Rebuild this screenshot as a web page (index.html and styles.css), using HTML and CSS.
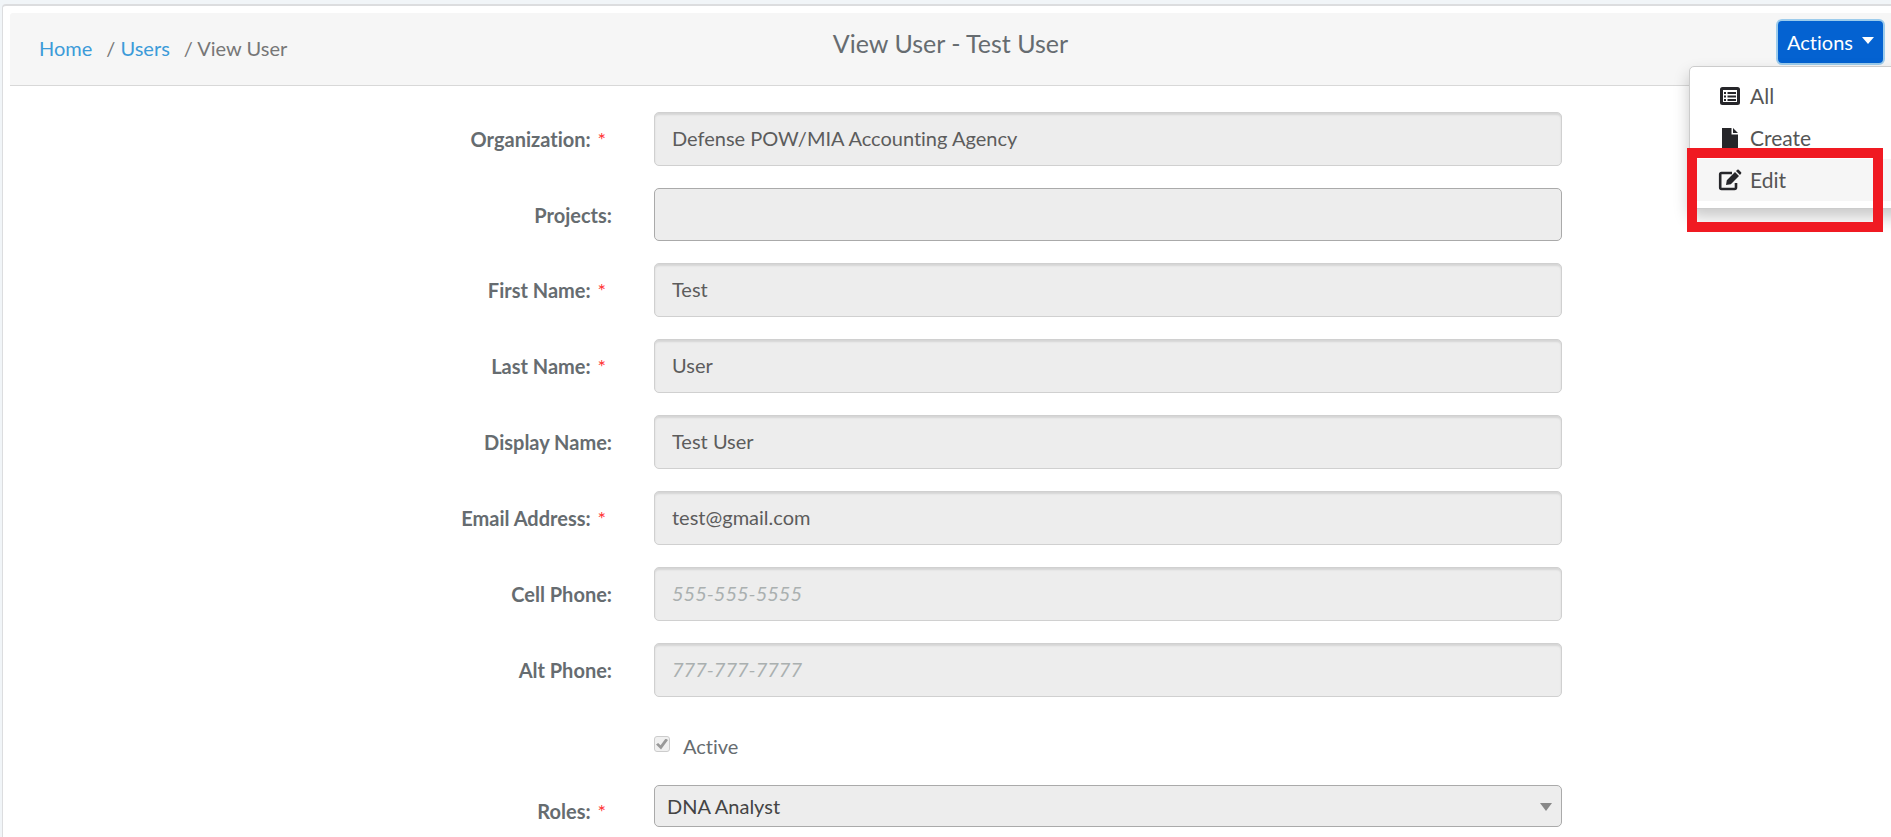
FILE: index.html
```html
<!DOCTYPE html>
<html lang="en">
<head>
<meta charset="utf-8">
<title>View User - Test User</title>
<link rel="stylesheet" href="styles.css">
</head>
<body>
<main class="panel">
  <header class="panel-header">
    <nav class="breadcrumb" aria-label="Breadcrumb">
      <a href="#">Home</a>
      <span class="crumb">/ <a href="#">Users</a></span>
      <span class="crumb">/ View User</span>
    </nav>
    <h1 class="title">View User - Test User</h1>
    <div class="actions">
      <button class="actions-button" type="button" aria-haspopup="true" aria-expanded="true">Actions <span class="caret"></span></button>
      <ul class="menu">
        <li><a class="menu-item" href="#">
          <svg class="icon" viewBox="0 0 24 24"><rect x="3.500" y="4.500" width="17" height="15" rx="1" fill="none" stroke="currentColor" stroke-width="3"/><path d="M6 8h2v2H6zM6 11.500h2v2H6zM6 15h2v2H6zM9.500 8H18v2H9.500zM9.500 11.500H18v2H9.500zM9.500 15H18v2H9.500z" fill="currentColor"/></svg>
          All</a></li>
        <li><a class="menu-item" href="#">
          <svg class="icon" viewBox="0 0 24 24"><path d="M4 2h9.500v6.500H20V22H4zM15 2l5 5h-5z" fill="currentColor"/></svg>
          Create</a></li>
        <li><a class="menu-item is-active" href="#">
          <svg class="icon" viewBox="0 0 24 24"><path d="M14 5H3.500Q2.200 5 2.200 6.300V19.500Q2.200 21 3.500 21H16.500Q18 21 18 19.500V15" fill="none" stroke="currentColor" stroke-width="2.600"/><path d="M8 17l.8-4.800L17 4l4 4-8.200 8.200zM18 3l1.300-1.200q.7-.6 1.400 0l2.400 2.400q.7.700 0 1.400L22 7z" fill="currentColor"/></svg>
          Edit</a></li>
      </ul>
      <div class="highlight"></div>
    </div>
  </header>

  <form class="form">
    <div class="row">
      <label class="label" for="org">Organization: <span class="required">*</span></label>
      <input class="field" id="org" type="text" value="Defense POW/MIA Accounting Agency" disabled>
    </div>
    <div class="row">
      <label class="label" for="projects">Projects:</label>
      <input class="field field-picker" id="projects" type="text" disabled>
    </div>
    <div class="row">
      <label class="label" for="first">First Name: <span class="required">*</span></label>
      <input class="field" id="first" type="text" value="Test" disabled>
    </div>
    <div class="row">
      <label class="label" for="last">Last Name: <span class="required">*</span></label>
      <input class="field" id="last" type="text" value="User" disabled>
    </div>
    <div class="row">
      <label class="label" for="display">Display Name:</label>
      <input class="field" id="display" type="text" value="Test User" disabled>
    </div>
    <div class="row">
      <label class="label" for="email">Email Address: <span class="required">*</span></label>
      <input class="field" id="email" type="email" value="test@gmail.com" disabled>
    </div>
    <div class="row">
      <label class="label" for="cell">Cell Phone:</label>
      <input class="field" id="cell" type="tel" placeholder="555-555-5555" disabled>
    </div>
    <div class="row">
      <label class="label" for="alt">Alt Phone:</label>
      <input class="field" id="alt" type="tel" placeholder="777-777-7777" disabled>
    </div>
    <div class="row row-check">
      <div class="check">
        <input class="checkbox" id="active" type="checkbox" checked disabled>
        <label for="active">Active</label>
      </div>
    </div>
    <div class="row row-roles">
      <label class="label" for="roles">Roles: <span class="required">*</span></label>
      <div class="select-wrap">
        <select class="select" id="roles" disabled><option>DNA Analyst</option></select>
      </div>
    </div>
  </form>
</main>
</body>
</html>
```
FILE: styles.css
```css
* { box-sizing: border-box; }

body {
  margin: 0;
  padding: 4px 0 0 2px;
  background: #f1f5f8;
  color: #666c70;
  font-family: Lato, "Liberation Sans", sans-serif;
  font-size: 20px;
  font-variant-ligatures: none;
  line-height: 30px;
  overflow: hidden;
}

a { color: #3c9bd9; text-decoration: none; }

.panel {
  min-height: 100vh;
  padding: 7px 0 0 7px;
  border: solid #dcdddf;
  border-width: 2px 0 0 1px;
  border-radius: 4px 0 0 0;
  background: #fff;
}

.panel-header {
  display: grid;
  grid-template-columns: 1fr auto 1fr;
  align-items: start;
  height: 73px;
  border-bottom: 1px solid #d8d8d8;
  border-radius: 3px 0 0 0;
  background: #f6f6f6;
}

.breadcrumb {
  display: flex;
  gap: 14px;
  padding: 20px 0 0 29px;
  color: #777;
}

.title {
  margin: 0;
  padding-top: 15px;
  font-size: 25px;
  font-weight: 400;
  line-height: 30px;
}

.actions {
  position: relative;
  justify-self: end;
  padding: 6px 6px 0;
}

.actions-button {
  display: flex;
  align-items: center;
  gap: 9px;
  height: 46px;
  padding: 0 9px;
  border: 2px solid #9dccec;
  border-radius: 6px;
  background: #0462d1;
  color: #fff;
  font: inherit;
  font-variant-ligatures: none;
}

.caret {
  margin-top: -4px;
  border: 6px solid transparent;
  border-top: 7px solid #fff;
  border-bottom: 0;
}

.menu {
  position: absolute;
  top: 53px;
  right: -20px;
  width: 222px;
  margin: 0;
  padding: 8px 0 7px;
  list-style: none;
  border: 1px solid #ccc;
  border-radius: 5px;
  background: #fff;
  box-shadow: 0 8px 16px rgba(0, 0, 0, 0.22);
}

.menu-item {
  display: flex;
  align-items: center;
  gap: 8px;
  height: 42px;
  padding-left: 28px;
  color: #555;
  font-size: 21px;
}

.menu-item.is-active { background: #f6f6f6; }

.icon {
  width: 24px;
  height: 24px;
  color: #26262a;
}

.highlight {
  position: absolute;
  top: 135px;
  right: 8px;
  width: 196px;
  height: 84px;
  border: 10px solid #f01a22;
  pointer-events: none;
}

.form {
  display: flex;
  flex-direction: column;
  gap: 22px;
  padding-top: 26px;
}

.row {
  display: grid;
  grid-template-columns: 4fr 6fr 2fr;
  align-items: center;
}

.label {
  padding-right: 25px;
  text-align: right;
  font-weight: 700;
}

.required {
  margin: 0 6px 0 2px;
  color: #f33;
  font-weight: 400;
}

.field {
  width: auto;
  min-width: 0;
  height: 54px;
  margin: 0 16px 0 17px;
  padding: 0 17px 2px;
  border: 1px solid #d0d0d0;
  border-radius: 5px;
  background: #ededed;
  box-shadow: inset 0 2px 2px rgba(0, 0, 0, 0.1);
  color: #5c5c5c;
  font: inherit;
  font-variant-ligatures: none;
}

.field::placeholder {
  color: #aab0b0;
  font-style: italic;
  opacity: 1;
}

.field-picker {
  height: 53px;
  border-color: #aaa;
  box-shadow: none;
}

.row-check { padding: 12px 0 2px; }

.check {
  grid-column: 2;
  display: flex;
  align-items: center;
  gap: 13px;
  margin-left: 17px;
}

.checkbox {
  display: grid;
  place-items: center;
  width: 16px;
  height: 16px;
  margin: 0 0 4px;
  appearance: none;
  border: 1px solid #ccc;
  border-radius: 3px;
  background: #f0f0f0;
}

.checkbox::before {
  content: "";
  width: 12px;
  height: 11px;
  background: #999;
  clip-path: polygon(0 55%, 18% 40%, 38% 62%, 80% 0, 100% 14%, 42% 100%);
}

.select-wrap {
  position: relative;
  margin: 0 16px 0 17px;
}

.select {
  display: block;
  width: 100%;
  height: 42px;
  padding: 0 12px;
  appearance: none;
  border: 1px solid #aaa;
  border-radius: 5px;
  background: #ededed;
  color: #444;
  font: inherit;
  font-variant-ligatures: none;
  opacity: 1;
}

.select-wrap::after {
  content: "";
  position: absolute;
  top: 18px;
  right: 10px;
  border: 6px solid transparent;
  border-top: 8px solid #888;
  border-bottom: 0;
}

.row-roles .label { padding-top: 10px; }
```
